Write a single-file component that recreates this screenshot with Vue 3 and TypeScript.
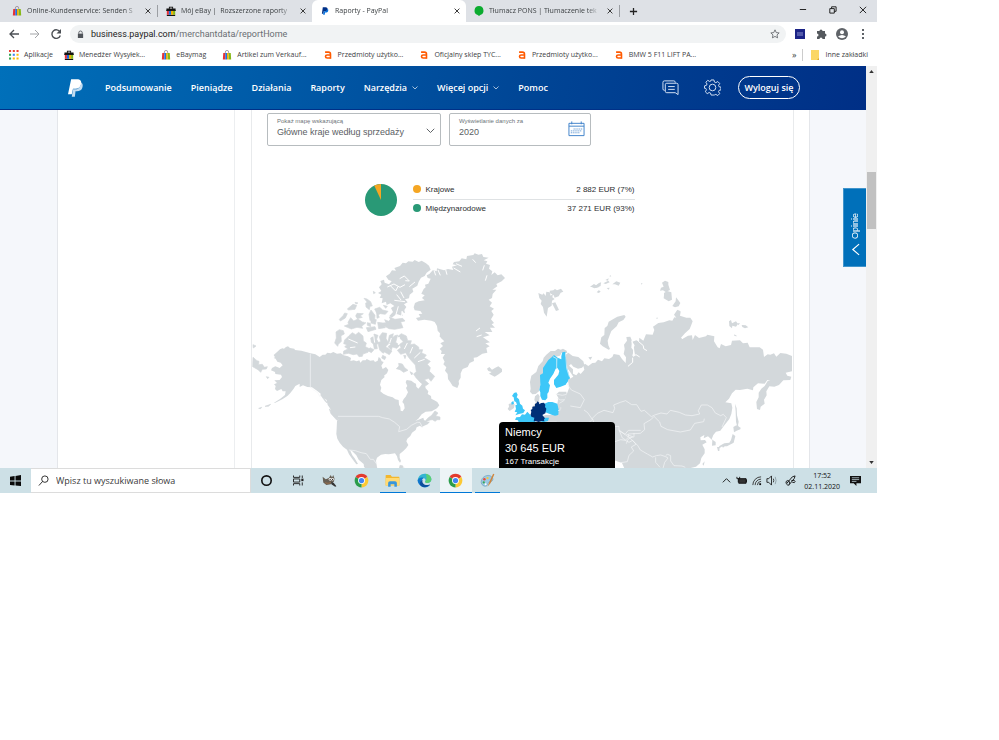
<script setup lang="ts">
import { ref } from 'vue'

interface Tab { title: string; icon: string; active?: boolean }
interface Bookmark { title: string; icon: string }

const tabs: Tab[] = [
  { title: 'Online-Kundenservice: Senden S', icon: 'bag' },
  { title: 'Mój eBay |  Rozszerzone raporty', icon: 'case' },
  { title: 'Raporty - PayPal', icon: 'paypal', active: true },
  { title: 'Tłumacz PONS | Tłumaczenie tek', icon: 'pons' },
]
const bookmarks: Bookmark[] = [
  { title: 'Aplikacje', icon: 'apps' },
  { title: 'Menedżer Wysyłek...', icon: 'case' },
  { title: 'eBaymag', icon: 'bag' },
  { title: 'Artikel zum Verkauf...', icon: 'bag' },
  { title: 'Przedmioty użytko...', icon: 'allegro' },
  { title: 'Oficjalny sklep TYC...', icon: 'allegro' },
  { title: 'Przedmioty użytko...', icon: 'allegro' },
  { title: 'BMW 5 F11 LIFT PA...', icon: 'allegro' },
]
const links = [
  { title: 'Podsumowanie' },
  { title: 'Pieniądze' },
  { title: 'Działania' },
  { title: 'Raporty' },
  { title: 'Narzędzia', menu: true },
  { title: 'Więcej opcji', menu: true },
  { title: 'Pomoc' },
]
const sales = [
  { name: 'Krajowe', value: '2 882 EUR (7%)', kind: 'home' },
  { name: 'Międzynarodowe', value: '37 271 EUR (93%)', kind: 'abroad' },
]
const taskIcons = [
  { name: 'cortana' }, { name: 'taskview' }, { name: 'gimp' }, { name: 'chrome' },
  { name: 'folder', open: true }, { name: 'edge' }, { name: 'chrome', open: true, active: true },
  { name: 'paint', open: true },
]
const address = ref('business.paypal.com/merchantdata/reportHome')
const mapMode = ref('sales')
const period = ref('2020')
</script>

<template>
  <svg class="defs" aria-hidden="true">
    <defs>
      <symbol id="bag" viewBox="0 0 20 24">
        <path d="M6 9V5a4 4 0 0 1 8 0v4" fill="none" stroke="#9a8c98" stroke-width="2" />
        <path d="M1 7h5v16H0z" fill="#e53238" /><path d="M6 7h4v16H6z" fill="#1f6fe0" />
        <path d="M10 7h4v16h-4z" fill="#f5af02" /><path d="M14 7h5l1 16h-6z" fill="#86b817" />
      </symbol>
      <symbol id="case" viewBox="0 0 24 24">
        <path d="M7 6V2h10v4h6v6H1V6zM2 21h20v3H2z" fill="#111" /><path d="M9 4h6v2H9z" fill="#fff" />
        <path d="M2 11h5v10H2z" fill="#e53238" /><path d="M7 11h5v10H7z" fill="#1f6fe0" />
        <path d="M12 11h5v10h-5z" fill="#f5af02" /><path d="M17 11h5v10h-5z" fill="#86b817" />
        <path d="M1 10h22v2H1z" fill="#111" />
      </symbol>
      <symbol id="paypal" viewBox="0 0 28 32">
        <path d="M7 4h9c5 0 7 3 6 7-1 4-4 6-9 6h-3l-1 8H4z" fill="#003087" />
        <path d="M22 9c3 2 3 4 2 7-1 4-4 5-8 5h-2l-1 7H8l1-5 2-6h4c4 0 6-3 7-8z" fill="#0070e0" />
      </symbol>
      <symbol id="paypal-white" viewBox="0 0 24 28">
        <path d="M5 0h9c6 0 8 3 7 8-1 5-4 7-9 7H8L6 24H0z" fill="#fff" />
        <path d="M21 5c3 2 3 5 2 8-1 4-4 6-9 6h-2l-1 9H6l2-12h4c5 0 8-4 9-11z" fill="#c3dcf1" />
      </symbol>
      <symbol id="pons" viewBox="0 0 24 24">
        <path d="M12 0a11 11 0 0 1 3 21.500l-3 2.500-3-2.500A11 11 0 0 1 12 0z" fill="#0bab2f" />
      </symbol>
      <symbol id="apps" viewBox="0 0 24 24">
        <path d="M0 0h5v5H0zm9 0h5v5H9zm9 0h5v5h-5z" fill="#ea4335" />
        <path d="M0 9h5v5H0z" fill="#34a853" /><path d="M9 9h5v5H9z" fill="#4285f4" /><path d="M18 9h5v5h-5zM9 18h5v5H9zm9 0h5v5h-5z" fill="#fbbc05" />
        <path d="M0 18h5v5H0z" fill="#34a853" />
      </symbol>
      <symbol id="allegro" viewBox="0 0 24 24">
        <path d="M5 5h8q5 0 5 5v11" fill="none" stroke="#ff5a00" stroke-width="3.800" />
        <path d="M18 12h-8q-4 0-4 3.500t4 3.500h8" fill="none" stroke="#ff5a00" stroke-width="3.800" />
      </symbol>
      <symbol id="cortana" viewBox="0 0 24 24"><circle cx="12" cy="12" r="7.500" fill="none" stroke="#111" stroke-width="2.600" /></symbol>
      <symbol id="taskview" viewBox="0 0 24 24">
        <path d="M4 4v3h10V4M4 20v-3h10v3M4 9.500h10v5H4zM18 4v4m0 7v5" fill="none" stroke="#222" stroke-width="1.500" />
        <path d="M16.500 9h3.500v4h-3.500z" fill="#222" />
      </symbol>
      <symbol id="gimp" viewBox="0 0 24 24">
        <path d="M1 6l5 4 5-2 3-5 2 4 2-4 2 6-1 5-5 4-7 1-5-4z" fill="#675f54" />
        <circle cx="13" cy="10" r="2.200" fill="#fff" /><circle cx="17" cy="10" r="2" fill="#fff" /><circle cx="13" cy="10" r="1" /><circle cx="17" cy="10" r="1" />
        <path d="M15 14l4 2 4 5-2 1-6-4z" fill="#333" /><path d="M5 15q4 3 9 0" stroke="#8d6a4c" stroke-width="2" fill="none" />
      </symbol>
      <symbol id="chrome" viewBox="0 0 24 24">
        <path d="M12 12L2.500 6.500A11 11 0 0 1 21.500 6.500z" fill="#e33b2e" />
        <path d="M12 12l9.500-5.500A11 11 0 0 1 12 23z" fill="#fcc934" />
        <path d="M12 12v11A11 11 0 0 1 2.500 6.500z" fill="#2b9c4b" />
        <circle cx="12" cy="12" r="5.500" fill="#fff" /><circle cx="12" cy="12" r="4.200" fill="#4285f4" />
      </symbol>
      <symbol id="folder" viewBox="0 0 24 24">
        <path d="M1 4q0-1 1-1h7l2 3h11q1 0 1 1v13H1z" fill="#f2b72e" /><path d="M1 8h22v12H1z" fill="#ffda73" />
        <path d="M5 22v-6q0-3 3-3h8q3 0 3 3v6h-4v-4H9v4z" fill="#3796dc" />
      </symbol>
      <symbol id="edge" viewBox="0 0 24 24">
        <path d="M1 13C1 6 6 1 12 1s11 4 11 9c0 4-3 6-7 6-2 0-3-1-3-2 2-4-1-6-4-6-4 0-7 2-8 5z" fill="#34b5d0" />
        <path d="M14 1c6 1 9 5 9 9 0 4-3 6-7 6-2 0-3-1-3-2 3-3 3-7 1-13z" fill="#5bd073" />
        <path d="M1 12c1-4 6-6 10-4-4 2-4 6-2 9s7 4 12 2c-3 4-9 5-13 3s-7-6-7-10z" fill="#0f76cc" />
        <path d="M9 11c-2 5 3 9 9 8l3-1c-3 5-11 6-15 2-3-4 0-8 3-9z" fill="#0c4f9d" />
      </symbol>
      <symbol id="paint" viewBox="0 0 24 24">
        <path d="M2 13C3 7 9 3 15 4c6 2 7 7 4 9-2 2-5 0-6 3 0 3-2 6-6 5-3-1-6-4-5-8z" fill="#9cc9e4" stroke="#6c9db8" />
        <circle cx="7" cy="10" r="2" fill="#e84a3c" /><circle cx="12" cy="8" r="1.800" fill="#f6cb36" /><circle cx="6" cy="15" r="1.800" fill="#3aa757" /><circle cx="9" cy="18" r="1.500" fill="#fff" />
        <path d="M21 1l-6 13-3 8 5-6 6-14z" fill="#d1853b" />
      </symbol>
      <symbol id="close" viewBox="0 0 10 10"><path d="M1 1l8 8M9 1L1 9" stroke="currentColor" stroke-width="1.600" fill="none" /></symbol>
      <symbol id="down" viewBox="0 0 12 8"><path d="M1 1l5 5 5-5" stroke="currentColor" stroke-width="1.300" fill="none" /></symbol>
    </defs>
  </svg>

  <div class="desktop">
    <header class="browser">
      <div class="tabbar">
        <div v-for="(tab, i) in tabs" :key="i" class="tab" :class="{ active: tab.active, ruled: i === 0 || i === 3 }">
          <svg class="favicon"><use :href="'#' + tab.icon" /></svg>
          <span class="tab-title">{{ tab.title }}</span>
          <button class="tab-close" aria-label="Zamknij kartę"><svg><use href="#close" /></svg></button>
        </div>
        <button class="new-tab" aria-label="Nowa karta"><svg viewBox="0 0 10 10"><path d="M5 1v8M1 5h8" stroke="#222" stroke-width="1.400" /></svg></button>
        <div class="window-buttons">
          <button aria-label="Minimalizuj"><svg viewBox="0 0 10 10"><path d="M2 5h7" stroke="#111" /></svg></button>
          <button aria-label="Przywróć"><svg viewBox="0 0 10 10"><path d="M2 4h5v5H2zM4 4V2h5v5H7" fill="none" stroke="#111" /></svg></button>
          <button aria-label="Zamknij"><svg viewBox="0 0 10 10"><path d="M2 2l7 7M9 2L2 9" fill="none" stroke="#111" /></svg></button>
        </div>
      </div>

      <div class="toolbar">
        <button aria-label="Wstecz"><svg viewBox="0 0 12 12"><path d="M11 6H2m4-4L2 6l4 4" fill="none" stroke="#4b4f54" stroke-width="1.300" /></svg></button>
        <button aria-label="Dalej"><svg viewBox="0 0 12 12"><path d="M1 6h9M6 2l4 4-4 4" fill="none" stroke="#a3a5a8" /></svg></button>
        <button aria-label="Odśwież"><svg viewBox="0 0 12 12"><path d="M10 4a4.300 4.300 0 1 0 .3 3.500" fill="none" stroke="#4b4f54" stroke-width="1.400" /><path d="M11 1v4.500H6.500z" fill="#4b4f54" /></svg></button>
        <label class="omnibox">
          <svg class="lock" viewBox="0 0 8 10"><path d="M1 4h6v5H1z" fill="#50545a" /><path d="M2 4V3a2 2 0 0 1 4 0v1" fill="none" stroke="#50545a" /></svg>
          <span class="address"><span aria-hidden="true"><b>business.paypal.com</b>/merchantdata/reportHome</span><input v-model="address" type="text" aria-label="Adres" /></span>
          <svg class="star" viewBox="0 0 12 12"><path d="M6 1l1.500 3.300 3.500.4-2.600 2.400.7 3.500L6 8.900l-3.100 1.700.7-3.500L1 4.700l3.500-.4z" fill="none" stroke="#5f6368" /></svg>
        </label>
        <div class="extensions">
          <button aria-label="Rozszerzenie"><svg viewBox="0 0 12 12"><path d="M1 1h10v10H1z" fill="#1b2386" /><path d="M3 5h6M3 7h6" stroke="#8e94cf" /></svg></button>
          <button aria-label="Rozszerzenia"><svg viewBox="0 0 12 12"><path d="M2 3h2.500a1.500 1.500 0 1 1 3 0H10v2.500a1.500 1.500 0 1 1 0 3V11H7.500a1.500 1.500 0 0 0-3 0H2V8.500a1.500 1.500 0 0 0 0-3z" fill="#55595e" /></svg></button>
          <button aria-label="Profil"><svg viewBox="0 0 12 12"><circle cx="6" cy="6" r="6" fill="#5f6368" /><circle cx="6" cy="4.200" r="2" fill="#fff" /><path d="M2 8.500q4-3 8 0-4 3.500-8 0z" fill="#fff" /></svg></button>
          <button aria-label="Menu"><svg viewBox="0 0 12 12"><path d="M5 1h2v2H5zm0 4h2v2H5zm0 4h2v2H5z" fill="#5f6368" /></svg></button>
        </div>
      </div>

      <nav class="bookmarks" aria-label="Zakładki">
        <a v-for="(mark, i) in bookmarks" :key="i" href="#"><svg class="favicon"><use :href="'#' + mark.icon" /></svg><span>{{ mark.title }}</span></a>
        <div class="more-marks">
          <button class="chevrons" aria-label="Więcej zakładek">»</button>
          <a href="#" class="other"><svg class="favicon" viewBox="0 0 10 10"><path d="M1 0h8v10H1z" fill="#fbd765" /><path d="M7 10l2-2v2z" fill="#d9a72b" /></svg><span>Inne zakładki</span></a>
        </div>
      </nav>
    </header>

    <div class="viewport">
      <div class="page">
        <nav class="paypal-bar" aria-label="PayPal">
          <a href="#" class="logo" aria-label="PayPal"><svg><use href="#paypal-white" /></svg></a>
          <a v-for="link in links" :key="link.title" href="#" class="nav-link">{{ link.title }}<svg v-if="link.menu"><use href="#down" /></svg></a>
          <div class="account">
            <button class="glyph" aria-label="Wiadomości">
              <svg viewBox="0 0 18 18"><path d="M3 12H2.500Q1 12 1 10.500v-7Q1 2 2.500 2h10Q14 2 14 3.500V4M5 4.500h10.500q1.500 0 1.500 1.500v10.500l-3-2H5q-1.500 0-1.500-1.500V6Q3.500 4.500 5 4.500zM6.500 8h7m-7 3h7" /></svg>
            </button>
            <button class="glyph" aria-label="Ustawienia">
              <svg viewBox="0 0 18 18"><path d="M7.500 1h3l.6 2.300 1.400.6 2.100-1.200 2 2-1.200 2.100.6 1.400 2 .5v2.800l-2 .5-.6 1.400 1.200 2.100-2 2-2.100-1.200-1.400.6L10.500 17h-3l-.6-2.100-1.400-.6-2.100 1.200-2-2 1.200-2.100L2 10l-1.500-.2V7.300L2.600 6.700 3.200 5.300 2 3.400l2-2 2 1.200 1-.3z" /><circle cx="9" cy="9" r="3.500" /></svg>
            </button>
            <button class="logout">Wyloguj się</button>
          </div>
        </nav>

        <div class="layout">
          <div class="sheet">
            <aside class="side"></aside>
            <main class="report">
              <div class="filters">
                <div class="field wide">
                  <label for="mode">Pokaż mapę wskazującą</label>
                  <select id="mode" v-model="mapMode"><option value="sales">Główne kraje według sprzedaży</option></select>
                  <svg class="field-down"><use href="#down" /></svg>
                </div>
                <div class="field narrow">
                  <label for="period">Wyświetlanie danych za</label>
                  <input id="period" v-model="period" type="text" />
                  <svg class="calendar" viewBox="0 0 18 16"><path d="M1 2h16v13H1zM1 5h16M4 0v3m10-3v3" fill="none" stroke="#3b7fc9" /><path d="M6 8h9M3 10h12M3 12h9" stroke="#3b7fc9" stroke-dasharray="1 1" /></svg>
                </div>
              </div>

              <div class="summary">
                <svg class="pie" viewBox="0 0 32 32"><circle cx="16" cy="16" r="16" fill="#299976" /><path d="M16 16V0A16 16 0 0 0 9.200 1.500z" fill="#f5a623" /></svg>
                <table>
                  <tbody>
                    <tr v-for="row in sales" :key="row.name"><th scope="row"><i :class="row.kind"></i>{{ row.name }}</th><td>{{ row.value }}</td></tr>
                  </tbody>
                </table>
              </div>

              <div class="map-area">
                <svg class="map" viewBox="252 240 541 228" preserveAspectRatio="xMidYMin slice" role="img" aria-label="Mapa świata">
                  <g transform="translate(240 240) scale(.33333)">
                    <path class="land" d="M105 352L101 345 112 335 120 328 127 325 132 326 138 321 144 319 150 324 163 326 165 330 184 332 198 336 212 340 226 343 239 351 248 344 256 344 262 338 272 340 280 336 291 341 302 340 311 346 324 349 333 354 331 363 341 361 350 364 358 361 361 368 368 361 377 361 380 357 391 362 401 361 405 366 413 362 416 351 421 355 425 364 431 366 424 377 428 387 438 381 445 390 441 400 432 407 434 411 424 420 420 434 424 443 421 454 430 461 444 468 458 472 466 478 476 480 477 494 481 501 482 512 488 514 494 505 492 492 487 486 491 477 497 470 504 457 498 444 502 438 497 427 500 420 514 422 523 429 528 431 529 440 535 446 542 438 548 429 554 432 557 445 565 454 563 462 573 468 574 476 583 481 592 486 598 496 591 505 575 514 557 515 545 523 535 536 526 543 539 538 550 533 552 540 561 545 570 545 563 553 551 558 545 562 540 557 530 562 527 570 516 578 511 588 502 596 499 604 505 615 499 624 490 633 479 642 479 653 483 663 480 668 474 660 471 649 465 640 456 641 446 643 436 642 423 644 411 653 408 662 411 682 415 690 379 690 372 680 371 672 356 659 349 646 337 634 330 630 337 646 344 655 354 672 349 673 337 657 327 643 321 629 309 620 299 608 292 596 289 582 290 565 291 543 296 538 285 530 276 518 270 505 263 495 260 480 250 473 243 462 231 452 216 442 202 441 189 436 179 441 179 431 166 438 161 446 151 459 142 468 127 478 106 488 101 489 121 476 135 465 137 454 128 454 124 447 111 453 105 447 107 438 102 433 111 429 103 421 119 420 126 411 123 404 106 402 105 396 93 391 96 384 106 379 119 384 128 376 122 368 112 365 107 356 101 354Z" />
                    <path class="land" d="M438 109L449 101 456 91 468 92 463 84 480 78 488 68 498 70 505 64 518 65 524 60 536 66 545 62 558 70 567 77 572 89 560 98 554 108 543 113 536 125 532 137 517 146 520 155 509 164 507 175 495 178 503 187 492 193 499 201 493 210 495 220 484 214 488 228 470 222 455 233 448 228 459 216 453 204 463 198 451 190 440 195 438 185 425 190 428 175 419 173 424 164 414 159 424 153 417 142 425 133 421 123 432 119 434 128 447 133 455 124 445 119Z" />
                    <path class="land isles" d="M448 231l17 7 23-3 7 8-13 3 7 17-25 5-17-2-14-8-4-9 9-1-4-9 12 5 5-6zM288 276l10-7 12 3 3 10-10 5 1 17-9 9-2 6-9-10 5-15zM314 300l13-13 10-9 10 6 9-7 13 11 1 15 9 6-3 11 12 6-4 11-15 5-2 7-10 1-6-8-11 2-15-4-15 3 1-10 13-6-10-7 7-6-10-3zM309 227l5-8 8 2-6 13-15 9-3-5zM322 207l17-14 11 3-5 12-19 2zM324 247l8-14 9 10 13-6 13 9 11 2-13 11 3 6-17-3-17 5-12-5-9-4 13-5zM351 220l19 1-10 7 7 4-15 4-5-8zM372 175l9 2 11 8 5 13-7 1-2 10-10-8-1-12 5-2zM387 223l6-13 12 16-1 13-7-3-7 6zM404 207l15-5 9 8 16 4-8 9-15-2-8 4zM382 248l9 2 1 10-10-4zM393 236l16 3-3 14-13-4zM379 263l26-3 3 8-24 7zM402 282l12 4-4 12 6 11-6 5 2 12-9 1-3-15-6-5-2-13 10-5zM390 323l12 6-8 9-10-6zM418 290l9-12 13 2-2 15 8 16-8 8 1 13-10 8-10-10-5-21 8-5zM448 286l12-5-3 13 7-7 9-2-6 22 12 9-8 9-14-4-3 9-10-10 8-6-8-8zM474 289l10-8 15 7 4 14 11 0-3 12 12-2 13 9 1 8 11 0-3 10 14 6-6 8 18 11-9 9 9 10-3 11 16 15-11 15-7-9-13 4 13 12-10 7-14-10-14-15-7-11 8-7-3-20-13-14-8-10-8-13-15 5-10-12 11-8-4-10 11-8zM440 322l16 11-8 11-13-7zM428 346l10 5-4 8-9-5zM476 370l11 2 7 11 10 8-13 6-11-8-11-3 8-8zM491 346l7 1-3 9zM510 395l9 5-4 5zM400 154l6 4-5 3zM345 187l9 2-6 3zM410 214l8 18-7 3zM430 196l12 3-5 6zM413 247l16 2 7 14-20 3zM552 548l11-13 12-9 10-13 9 6-7 9 13 3 0 8-9 0-5 5-9-5-7 1zM39 314l9 4-8 6zM39 352l12 10 6 2-1 10 11-1 6 9 9-2-3 7-12 1-5 9-8-8-16-9zM79 410l8 2-4 4zM92 493l-17 6 10 0zM65 502l-9 3 6 1zM246 458l9 12-2 6 9 12-4-1-16-22zM268 507l17 15 11 17-5 2-18-20zM480 676l9 2-1 5 9 3-3 4-16-5z" />
                    <path class="cut" d="M442 141l20-9 18 10 15-8m-16-18l14-8 15 15-12-1m-44 16l15 15 7-13m8 15l10 19m-22-10l13 16m25-40l17-14m-62 55l32 4m-20 14l-8 28m20-14l-3 18M401 286l3 22m50-14l-5 16M325 297l28 12m-23 14l16-2m156-12l-9 18m25-6l-8 19m31-3l-18 17m31 4l-20 7m-56-74l-3 24M374 226l1 21m-36-37l-6 10" />
                    <path class="border" d="M211 341v101l10 8 12 8 8 14M294 529h122l12 4 20 4 16 10 15 13-3 15 24-7 14-12 18-9h8l8 17M327 630l19 2 17 6 16 3 12 17 9 0 10 14" />
                  </g>
                  <g transform="translate(400 240) scale(.33333)">
                    <path class="land" d="M41 202L45 189 56 184 74 181 66 174 74 166 64 161 71 147 77 142 75 134 85 131 92 116 83 114 80 106 88 102 99 90 110 94 111 85 132 91 144 87 160 90 156 80 171 76 158 73 162 66 178 64 185 55 199 58 201 48 220 45 224 40 235 44 246 42 250 51 266 53 251 61 262 64 258 71 270 75 267 86 277 94 274 105 284 97 293 106 304 103 315 114 305 124 289 132 292 139 277 149 289 149 278 162 276 174 266 179 276 188 269 199 282 206 274 213 281 224 273 238 282 249 275 253 285 263 270 263 277 276 254 276 269 286 249 292 270 307 256 310 269 319 259 324 262 338 247 341 231 352 221 353 222 363 209 369 203 381 188 387 182 400 182 413 176 423 177 432 172 444 158 438 151 427 144 417 143 402 135 392 139 382 130 373 134 365 128 353 135 342 123 342 125 333 119 327 129 318 121 310 133 304 119 290 120 280 113 272 111 258 104 246 94 242 73 239 54 242 48 234 61 231 56 222 67 221 61 213 44 211Z" />
                    <path class="cut" d="M102 91l5 15m7-16l7 16m16-17l4 15m20-20l20 12m-13-25l18 8m32-21l9 10m26 8l-5 15m13 15l-5 16m-16 142l-12 9m17 12l-15 5m-109 3l-10 13m-1 19l12 7m1 19l-11 6" />
                    <path class="land" d="M261 386l7-5 8 8 10-6 9-4 11 8 0 8-10 8-12 7-17-9 8-5-10-3zM415 159l12 5 4-4 6 8 2-13 10 2 3 10 7-5-2 10 7 5-8 5-1 15-11 7-4 26-8-12-3-17-7-9 3-10-7-8zM449 152l11-1 5-4 6 4 12-5 7 9-8 3-6 11-12 4-3-7-11-6zM456 190l10-3 11 23-9 3zM570 140l12-8 6 4 14-10v12l-15 6-9-2zM590 157l6-6 6 3-5 5z" />
                    <path class="land" d="M390 426l2 20-2 9 7 8 10-1 10-8 10-48 10-18 13-20 13-17 17-4 5-9 10 1 7 0-2-7-11-6-7 3-8-3-9 7-13 0-13 11-8 9-3 11-13 14-6 18-15 11zM405 469l9-8 5 8-2 18-9 1-5-8zM326 492l10-3 8 4-2 11-13 9-6-6 4-7zM386 528l9-9 4-20 9-12 5 4-8 29zM412 545v-12l25-8 20 0 11 0 4-34 3-18-6-10 8-8 22 0 5 30 10 60z" />
                    <path class="blue" d="M420 405l9-5 0-16 16-24 10-8 7-7 11 8 1 30-7 3-7 16-10 14-5 12 5 8-4 20-4 5 0 13-6 7-10-2-5-11 0-11-3-7 3-16z" />
                    <path class="blue" d="M473 353l11 5 0-9 3-12 9-2 2 16 3 8 0 23 4 15 5 18-13 19-15 6-13 4-7-11 0-13 13-16 3-11-6-10 0-19z" />
                    <path class="blue" d="M342 459l7-2 4 7-3 8 7 6 3 13 7 6 2 9 6 5-5 8-13 3-11 4 6-9-8-2 4-8-2-11 5-2-3-8-5-2-2-12-5-4zM334 487l6-4 2 8-7 3zM349 532l11-1 6-8 9 1 7-9 9 10 12 6 5 7-4 12h-47l-3-9-9-2z" />
                    <path class="blue" d="M433 491l12-5 12 0 15 5 4 18-1 16-10 2-10-3-19-7-5-14zM414 541l13-8 20 0-3 10-15 4z" />
                    <path class="navy" d="M397 500l8-1 0-7 5-3 2-5 6 4-1 5 7-4 8-1 4 6-1 7 4 5-3 14-9 5 8 10-3 3 1 6-8-1-9 3-9-2-6 0 2-11-9-3-2-6 2-9-2-5 5-3z" />
                    <path class="border" d="M470 385V356l-11-6M497 340l3 45 8 25M467 462l20 4 13-3M470 474l12 6 13-1 5-12M478 490l20-12 11 8 11 23-16-1-24-4M474 512l23-7 20 7 14 0 16 9-2 14M475 527l9 15 21-1 2-10 18 5" />
                  </g>
                  <g transform="translate(590 260) scale(.33333)">
                    <path class="land" d="M-73 284L-65 278-52 288-35 291-20 304-17 315-24 323-36 326-50 320-57 312-63 317-51 328-51 341-41 346-34 337-28 342-17 329-20 317-15 311-5 318 7 309 16 308 24 299 36 304 43 295 57 297 67 291 71 282 88 285 96 297 107 309 108 292 101 282 104 267 102 254 111 242 109 231 121 230 126 242 124 263 131 272 127 288 135 284 131 263 134 256 127 245 139 241 147 245 148 233 160 242 168 223 188 224 193 210 189 200 205 189 221 187 238 181 247 182 253 172 259 173 252 164 262 149 272 155 270 167 289 173 301 173 308 184 303 197 299 207 285 220 273 233 277 237 294 227 306 226 308 240 315 225 327 234 348 229 352 224 373 229 372 244 383 262 389 265 393 252 407 259 423 255 426 242 450 241 459 250 473 248 479 262 495 262 509 262 519 269 522 291 533 283 541 284 552 280 559 290 571 279 589 281 606 288V334L587 338 592 347 604 350 601 360 580 361 567 375 553 380 538 379 529 394 530 406 522 419 524 431 512 440 510 450 501 447 499 426 506 412 506 398 514 386 524 378 533 363 541 363 532 360 524 371 504 370 490 382 489 391 472 386 450 390 437 389 426 400 417 416 406 427 424 430 427 443 424 462 418 477 402 497 391 512 378 515 370 525 365 538 377 546 377 556 366 557 367 541 354 529 341 535 343 525 331 532 332 541 345 540 350 547 337 554 344 568 344 580 334 594 330 610 318 620 298 625 285 640H120L103 625 96 609 70 600-100 640V480L-80 430-63 385-66 359-50 350-60 335-68 325Z" />
                    <path class="land" d="M103 165l4 5-7 10-14 7-6 12-16 14-5 13-6 16 2 14 5 11-4 2-18-10-8-8 4-19 9-7 1-21 8-6 4-13 18-10 8-5zM216 68l9-6 10 4 0 8 5 16-13 6-8-5-9 1 3-9 8-3zM222 99l10-6 12 4 2 22-10 5-15-9 1-9zM247 138l10-14 1-12 6 7 7 10-5 10-11 3zM265 151l7 3-7 5zM417 184l6-4 3 10 12-6 6 8-6 8-11-3-1 8-8-7zM443 190l7 0-5 6zM455 195l12 1 8 6-10 3-8-4zM433 223l9 6-9-1zM5 80l16-5 7 6-15 4zM20 73l14-5-5 8zM40 70l15-8 4 5-12 5zM46 60l10-5-2 7zM60 45l4 4-5 1zM67 73l12-9 12 4-5 9-11-4zM50 84l9-1-3 6zM153 70l5 0-4 4zM198 175l4-3 1 5zM435 431l5 14 1 21 5 19-2 11 5 9-6 0-5-20-1-31zM430 501l9-5 13 7-1 5-11 4-8 5zM428 522l8 6-5 20-20 11-14 0-8 5-2-5 16-9 15-2 5-8zM381 561l8 0-1 12-4 0zM395 557l11 0-7 6zM337 612l7-8-3 13zM-5 292l12-2-6 10z" />
                    <path class="cut" d="M125 242l6 25-1 22 8-5 11 7M145 244l15 13 1 9 10 6M128 293l0 14-14 12M276 236l27-24" />
                    <path class="border" d="M11 486l-4-11 15-15 20-9 27 7 5-13-3-10 20-8 16-5 18 12 15 0 13 20 10-3 21 19 10-5 19-6 18 3 10-11 27 6 18 8 20 2 23-5-4-10 9-17 18 0 14 8 10 16 16 8 8-4 9 10-13 28M192 469l-8 9-22 13 2 18-13 11-36 2 0 9-28-21M192 469l17 17 4 13 20 10 38 7 30-6 13-20 27-5 2-9M72 500l15-1 0 13 18 11 10-12 17 0 20 0M88 512l9 22 10 6 8-8 17-1 0-12M109 523l19 7-14 8-5 13M75 545l17-6 14 2 11 6 11-6 10 12-14 8 7 12-14 13-5 19-20 3M115 530l28 26 8 14 21 12 16 9 11-4 13-2 15 5 7 4-10 13-5 18M197 592l0 15 13 15M227 586l6-3 9 4 0 16 10 14 24 1 10 4M-70 370l14 20 27 12 12 17-12 24-30-5M-18 450l11 8 14 20-13 13" />
                  </g>
                </svg>
                <div class="tooltip"><span>Niemcy</span><strong>30 645 EUR</strong><small>167 Transakcje</small></div>
              </div>
            </main>
          </div>
        </div>
        <button class="feedback"><span>Opinie</span><svg viewBox="0 0 10 14"><path d="M9 1L2 7l7 6" fill="none" stroke="#fff" stroke-width="1.300" /></svg></button>
      </div>
      <div class="scrollbar">
        <svg viewBox="0 0 6 4"><path d="M0 4l3-4 3 4z" fill="#333" /></svg>
        <div class="track"><i></i></div>
        <svg viewBox="0 0 6 4"><path d="M0 0l3 4 3-4z" fill="#333" /></svg>
      </div>
    </div>

    <footer class="taskbar">
      <button class="start" aria-label="Start"><svg viewBox="0 0 12 12"><path d="M0 2l5-1v5H0zm6-1l6-1v6H6zM0 7h5v4.500L0 11zm6 0h6v5l-6-.5z" fill="#0a0a0a" /></svg></button>
      <label class="search">
        <svg viewBox="0 0 12 12"><circle cx="7.500" cy="4.500" r="3.500" fill="none" stroke="#222" /><path d="M5 7l-4 4.500" stroke="#222" /></svg>
        <input type="text" placeholder="Wpisz tu wyszukiwane słowa" aria-label="Wyszukaj" />
      </label>
      <div class="apps">
        <button v-for="(app, i) in taskIcons" :key="i" :class="{ open: app.open, current: app.active }" :aria-label="app.name"><svg><use :href="'#' + app.name" /></svg></button>
      </div>
      <div class="tray">
        <svg viewBox="0 0 12 12"><path d="M2 8l4-4 4 4" fill="none" stroke="#111" /></svg>
        <svg viewBox="0 0 12 12"><path d="M3 4h8v5H3z" fill="#333" stroke="#111" /><path d="M1 2v2h3V2M2.500 4v4" fill="none" stroke="#111" /><path d="M11 5h1v3h-1z" fill="#111" /></svg>
        <svg viewBox="0 0 12 12"><path d="M2 11A9 9 0 0 1 11 2M4.500 11A6.500 6.500 0 0 1 11 4.500M7 11a4 4 0 0 1 4-4" fill="none" stroke="#333" /><path d="M9 9h2v2H9z" fill="#111" /></svg>
        <svg viewBox="0 0 12 12"><path d="M1 4h2l3-3v10L3 8H1z" fill="none" stroke="#222" /><path d="M8 4q1 2 0 4" fill="none" stroke="#333" /><path d="M10 2q2 4 0 8" fill="none" stroke="#8fa0a6" /></svg>
        <svg class="pen" viewBox="0 0 12 12"><path d="M1 9q0-3 2-3t2 3-2 2-1-2L8 2l3-1-1 3-5 6m2-4q4-1 4 1t-3 1" fill="none" stroke="#111" /></svg>
        <div class="clock"><time>17:52</time><time>02.11.2020</time></div>
        <svg class="notice" viewBox="0 0 12 12"><path d="M0 1h12v8H7v3L4 9H0z" fill="#111" /><path d="M2 3h8M2 5h8M2 7h5" stroke="#cde0e6" stroke-width=".8" /></svg>
      </div>
    </footer>
  </div>
</template>

<style>
body { margin: 0; background: #fff; }
</style>

<style scoped>
* { box-sizing: border-box; }
button, input, select { border: 0; padding: 0; margin: 0; background: none; font: inherit; color: inherit; outline: 0; }
a { color: inherit; text-decoration: none; }
button { display: grid; place-items: center; }
svg { display: block; flex: none; }
.defs { position: absolute; width: 0; height: 0; }
.desktop { display: flex; flex-direction: column; height: calc(100vh - 247px); margin-right: 122px; overflow: hidden; font-family: "Liberation Sans", Arial, sans-serif; }

.browser { flex: none; font: 7px/12px "Open Sans", sans-serif; color: #3c4043; }
.tabbar { display: flex; height: 22px; padding-left: 4px; background: #dee1e6; }
.tab { position: relative; display: flex; align-items: center; gap: 5px; flex: 0 1 154px; min-width: 0; padding: 0 4px 0 8px; }
.tab.active { background: #fff; border-radius: 6px 6px 0 0; }
.tab.ruled { border-right: 1px solid #9b9ea3; border-image: linear-gradient(transparent 25%, #9b9ea3 25%, #9b9ea3 75%, transparent 75%) 1; }
.favicon { width: 10px; height: 10px; }
.tab-title { flex: 1; white-space: pre; mask-image: linear-gradient(90deg, #000 88%, transparent); }
.tab-close { width: 10px; height: 12px; color: #333; }
.tab-close svg { width: 6px; height: 6px; }
.new-tab { width: 26px; }
.new-tab svg { width: 9px; height: 9px; }
.window-buttons { display: flex; margin-left: auto; height: 18px; }
.window-buttons button { width: 30px; }
.window-buttons svg { width: 9px; height: 9px; }
.toolbar { display: flex; align-items: center; height: 24px; padding: 0 8px 0 3px; background: #fff; }
.toolbar > button { width: 21px; height: 20px; }
.toolbar > button svg { width: 12px; height: 12px; }
.omnibox { display: flex; align-items: center; gap: 7px; flex: 1; height: 18px; margin-left: 4px; padding: 0 6px 0 7px; border-radius: 9px; background: #f1f3f4; font: 9px/12px Roboto, sans-serif; }
.lock { width: 7px; height: 9px; }
.address { position: relative; flex: 1; color: #6a6e73; }
.address b { font-weight: 400; color: #222; }
.address input { position: absolute; inset: 0; width: 100%; color: transparent; }
.star { width: 10px; height: 10px; }
.extensions { display: flex; gap: 9px; margin-left: 8px; }
.extensions svg { width: 12px; height: 12px; }
.bookmarks { display: flex; align-items: center; gap: 16px; height: 20px; padding: 0 9px 3px; white-space: nowrap; background: #fff; }
.bookmarks a { display: flex; align-items: center; gap: 5px; }
.bookmarks > a:first-child { margin-right: -5px; }
.more-marks { display: flex; align-items: center; gap: 6px; margin-left: auto; }
.chevrons { font-size: 9px; }
.other { border-left: 1px solid #ccc; padding-left: 7px; }

.viewport { display: flex; flex: 1; min-height: 0; }
.page { position: relative; display: flex; flex-direction: column; flex: 1; min-width: 0; overflow: hidden; }
.paypal-bar { display: flex; align-items: center; gap: 19px; flex: none; height: 44px; padding: 0 66px 0 68px; background: linear-gradient(100deg, #0070ba, #004696 60%, #002f86); color: #fff; font: 600 9px/14px "Open Sans", sans-serif; border-bottom: 1px solid #003087; }
.logo { width: 18px; }
.logo svg { width: 15px; height: 18px; }
.nav-link { display: flex; align-items: center; gap: 5px; white-space: nowrap; }
.nav-link svg { width: 6px; height: 4px; }
.account { display: flex; align-items: center; gap: 25px; margin-left: auto; }
.glyph svg { width: 17px; height: 17px; fill: none; stroke: #dce8f6; stroke-width: 1; }
.logout { width: 62px; height: 23px; border: 1px solid #fff; border-radius: 12px; margin-left: -8px; }
.layout { flex: 1; min-height: 0; padding: 0 56px 0 57px; background: #f5f7fb; }
.sheet { display: flex; height: 100%; padding-right: 15px; background: #fff; border: solid #e4e6ea; border-width: 0 1px; }
.side { flex: none; width: 177px; border-right: 1px solid #eceef0; margin-right: 16px; }
.report { display: flex; flex-direction: column; flex: 1; min-width: 0; border: solid #e8eaec; border-width: 0 1px; }
.filters { display: flex; flex: none; gap: 8px; padding: 3px 15px 0; }
.field { position: relative; height: 33px; padding: 3px 9px; border: 1px solid #b7bcbf; border-radius: 2px; color: #5b6064; }
.wide { width: 174px; }
.narrow { width: 142px; }
.field label { display: block; font-size: 6px; line-height: 9px; color: #6c7378; }
.field select, .field input { display: block; width: 100%; height: 13px; font-size: 9px; line-height: 13px; appearance: none; }
.field-down { position: absolute; right: 5px; top: 14px; width: 9px; height: 6px; }
.calendar { position: absolute; right: 5px; top: 7px; width: 17px; height: 16px; }
.summary { display: flex; align-items: center; justify-content: center; gap: 16px; flex: none; height: 108px; margin-right: 46px; padding: 33px 0 34px; }
.pie { width: 32px; height: 32px; }
.summary table { width: 222px; border-collapse: collapse; font-size: 8px; line-height: 18px; color: #2c2e2f; }
.summary tr + tr { border-top: 1px solid #dfe2e4; }
.summary th { padding: 0; font-weight: 400; text-align: left; }
.summary td { padding: 0; text-align: right; }
.summary i { display: inline-block; width: 8px; height: 8px; border-radius: 50%; margin-right: 5px; vertical-align: -1px; }
.home { background: #f5a623; }
.abroad { background: #299976; }
.map-area { position: relative; flex: 1; min-height: 0; display: flex; margin-top: -14px; }
.map { width: 100%; height: 100%; }
.land { fill: #d3d8db; }
.isles { stroke: #d3d8db; stroke-width: 2; }
.cut { fill: none; stroke: #fff; stroke-width: 3; }
.border { fill: none; stroke: #f4f6f7; stroke-width: 2; }
.blue { fill: #3dc7f8; }
.navy { fill: #003077; }
.tooltip { position: absolute; left: 247px; bottom: 0; display: flex; flex-direction: column; width: 116px; height: 46px; padding: 2px 6px 0; border-radius: 4px 4px 0 0; overflow: hidden; background: #000; color: #fff; font-size: 11px; line-height: 16px; }
.tooltip strong { font-weight: 400; }
.tooltip small { font-size: 8px; line-height: 12px; }
.feedback { position: absolute; right: 0; top: 122px; display: flex; flex-direction: column; align-items: center; justify-content: center; gap: 4px; width: 23px; height: 79px; background: #0070ba; border: 1px solid #ffffff40; border-right: 0; color: #fff; font-size: 9px; padding-top: 14px; }
.feedback span { writing-mode: vertical-rl; transform: rotate(180deg); }
.feedback svg { width: 9px; height: 13px; }
.scrollbar { display: flex; flex-direction: column; align-items: center; flex: none; width: 11px; padding: 4px 0; background: #f0f0f0; }
.scrollbar svg { width: 5px; height: 3px; }
.track { flex: 1; width: 100%; padding: 99px 1px 0; }
.track i { display: block; height: 57px; background: #c1c1c1; }

.taskbar { display: flex; flex: none; height: 25px; background: #cde0e6; }
.start { width: 31px; }
.start svg { width: 11px; height: 11px; }
.search { display: flex; align-items: center; gap: 7px; width: 220px; padding: 0 7px; background: #fff; border: solid #dcdcdc; border-width: 1px 1px 1px 0; font: 9px/14px "Open Sans", sans-serif; }
.search svg { width: 11px; height: 11px; }
.search input { flex: 1; min-width: 0; }
.search input::placeholder { color: #3a3a3a; opacity: 1; }
.apps { display: grid; grid-template-columns: repeat(8, 1fr); width: 252px; }
.apps button { position: relative; }
.apps svg { width: 15px; height: 15px; }
.apps .open::after { content: ""; position: absolute; left: 3px; right: 3px; bottom: 0; height: 1px; background: #0078d7; }
.apps .current { background: #edf4f6; }
.apps .current::after { left: 0; right: 0; }
.tray { display: flex; align-items: center; gap: 4px; margin-left: auto; padding-right: 16px; }
.tray svg { width: 11px; height: 11px; }
.tray .pen { margin-left: 4px; }
.clock { display: flex; flex-direction: column; align-items: center; margin: 0 6px 0 4px; font: 7px/11px "Open Sans", sans-serif; color: #111; }
</style>
